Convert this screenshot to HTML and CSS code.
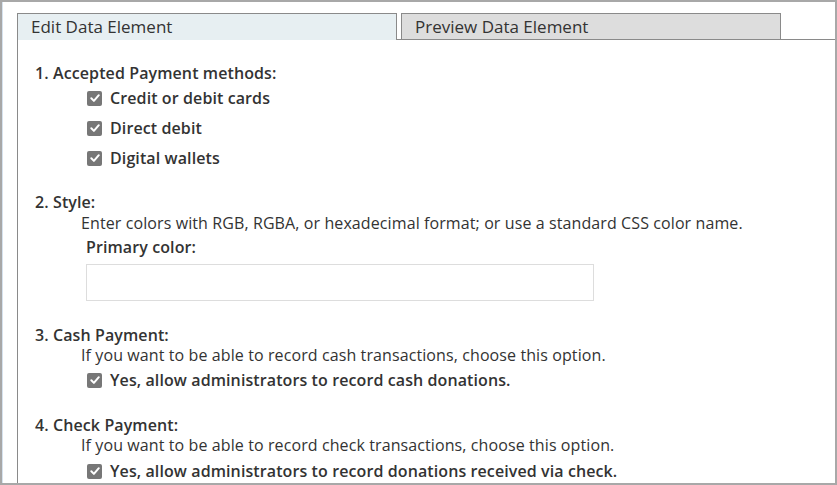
FILE: index.html
```html
<!DOCTYPE html>
<html>
<head>
<meta charset="utf-8">
<link rel="stylesheet" href="styles.css">
</head>
<body>
<div class="frame">
  <div class="panel">
    <div class="tabs">
      <div class="tab tab-active">Edit Data Element</div>
      <div class="tab-gap"></div>
      <div class="tab tab-inactive">Preview Data Element</div>
      <div class="tab-fill"></div>
    </div>
    <div class="content">
      <div class="section s1">
        <div class="heading">1. Accepted Payment methods:</div>
        <div class="check-row"><span class="cb"><svg viewBox="0 0 14 14" width="14" height="14"><path d="M3.3 7.3 L5.9 9.9 L10.8 4.2" fill="none" stroke="#fff" stroke-width="2" stroke-linecap="round" stroke-linejoin="round"/></svg></span><span class="cb-label">Credit or debit cards</span></div>
        <div class="check-row"><span class="cb"><svg viewBox="0 0 14 14" width="14" height="14"><path d="M3.3 7.3 L5.9 9.9 L10.8 4.2" fill="none" stroke="#fff" stroke-width="2" stroke-linecap="round" stroke-linejoin="round"/></svg></span><span class="cb-label">Direct debit</span></div>
        <div class="check-row"><span class="cb"><svg viewBox="0 0 14 14" width="14" height="14"><path d="M3.3 7.3 L5.9 9.9 L10.8 4.2" fill="none" stroke="#fff" stroke-width="2" stroke-linecap="round" stroke-linejoin="round"/></svg></span><span class="cb-label">Digital wallets</span></div>
      </div>
      <div class="section s2">
        <div class="heading">2. Style:</div>
        <div class="desc">Enter colors with RGB, RGBA, or hexadecimal format; or use a standard CSS color name.</div>
        <div class="field-label">Primary color:</div>
        <div class="input"></div>
      </div>
      <div class="section s3">
        <div class="heading">3. Cash Payment:</div>
        <div class="desc">If you want to be able to record cash transactions, choose this option.</div>
        <div class="check-row tight"><span class="cb"><svg viewBox="0 0 14 14" width="14" height="14"><path d="M3.3 7.3 L5.9 9.9 L10.8 4.2" fill="none" stroke="#fff" stroke-width="2" stroke-linecap="round" stroke-linejoin="round"/></svg></span><span class="cb-label">Yes, allow administrators to record cash donations.</span></div>
      </div>
      <div class="section s4">
        <div class="heading">4. Check Payment:</div>
        <div class="desc">If you want to be able to record check transactions, choose this option.</div>
        <div class="check-row tight"><span class="cb"><svg viewBox="0 0 14 14" width="14" height="14"><path d="M3.3 7.3 L5.9 9.9 L10.8 4.2" fill="none" stroke="#fff" stroke-width="2" stroke-linecap="round" stroke-linejoin="round"/></svg></span><span class="cb-label">Yes, allow administrators to record donations received via check.</span></div>
      </div>
    </div>
  </div>
</div>
</body>
</html>
```
FILE: styles.css
```css
html, body {
  margin: 0;
  padding: 0;
  background: #ffffff;
}
body {
  font-family: "Open Sans", "Noto Sans", sans-serif;
  font-size: 16px;
  color: #333333;
  letter-spacing: 0.1px;
}
.frame {
  width: 837px;
  height: 485px;
  box-sizing: border-box;
  border: 2px solid #a8a8a8;
  box-shadow: inset 1px 0 0 #d6e2ee;
  padding: 11px 0 0 15px;
  overflow: hidden;
}
.panel {
  border-left: 1px solid #8a8a8a;
  height: 100%;
  box-sizing: border-box;
}
.tabs {
  display: flex;
  height: 27px;
}
.tab {
  box-sizing: border-box;
  height: 27px;
  font-size: 17px;
  line-height: 26px;
  color: #333;
  letter-spacing: 0;
}
.tab-active {
  width: 379px;
  background: #e7eff2;
  border-top: 1px solid #8a8a8a;
  border-right: 1px solid #8a8a8a;
  padding-left: 13px;
}
.tab-gap {
  width: 4px;
  border-bottom: 1px solid #8a8a8a;
}
.tab-inactive {
  width: 380px;
  background: #dddddd;
  border: 1px solid #8a8a8a;
  padding-left: 13px;
  line-height: 25px;
}
.tab-fill {
  flex: 1;
  border-bottom: 1px solid #8a8a8a;
}
.content {
  padding: 23px 0 0 17px;
}
.heading {
  font-weight: 600;
  line-height: 20px;
}
.desc {
  line-height: 20px;
  padding-left: 46px;
}
.s2 .desc {
  margin-top: 1px;
}
.check-row {
  display: flex;
  align-items: center;
  height: 30px;
  padding-left: 52px;
}
.check-row.tight {
  height: 26px;
  margin-top: 2px;
}
.s4 .check-row.tight {
  margin-top: 3px;
}
.cb {
  width: 15px;
  height: 15px;
  border-radius: 2px;
  background: #777777;
  display: flex;
  align-items: center;
  justify-content: center;
  margin-right: 8px;
}
.cb svg {
  display: block;
}
.cb-label {
  font-weight: 600;
  line-height: 20px;
}
.section.s2 {
  margin-top: 19px;
}
.section.s3 {
  margin-top: 24px;
}
.section.s4 {
  margin-top: 22px;
}
.field-label {
  font-weight: 600;
  padding-left: 51px;
  line-height: 22px;
  margin-top: 3px;
}
.input {
  margin-left: 51px;
  margin-top: 6px;
  width: 508px;
  height: 37px;
  box-sizing: border-box;
  border: 1px solid #dddddd;
  background: #fff;
}
```
